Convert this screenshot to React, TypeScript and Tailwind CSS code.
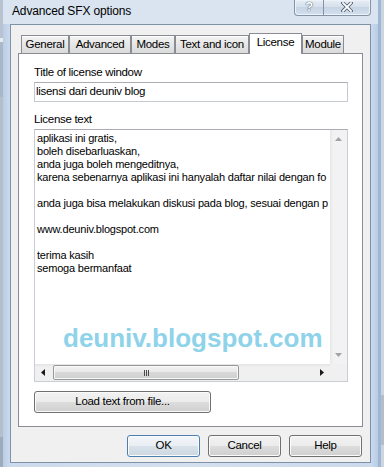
import React from "react";

const lines = [
  "aplikasi ini gratis,",
  "boleh disebarluaskan,",
  "anda juga boleh mengeditnya,",
  "karena sebenarnya aplikasi ini hanyalah daftar nilai dengan fo",
  "",
  "anda juga bisa melakukan diskusi pada blog, sesuai dengan p",
  "",
  "www.deuniv.blogspot.com",
  "",
  "terima kasih",
  "semoga bermanfaat",
];

const tabs = [
  { label: "General", w: "w-[48px]" },
  { label: "Advanced", w: "w-[62px]" },
  { label: "Modes", w: "w-[44px]" },
  { label: "Text and icon", w: "w-[74px]" },
  { label: "License", w: "w-[53px]", active: true },
  { label: "Module", w: "w-[42px]" },
];

function Btn({ children, w, def }: { children: React.ReactNode; w: string; def?: boolean }) {
  return (
    <div
      className={
        "h-[22px] rounded-[3px] border flex items-center justify-center text-[11.5px] text-black shadow-[inset_0_0_0_1px_#fbfbfb] " +
        w +
        (def
          ? " border-[#4d7fae] bg-[linear-gradient(#f3f6f9_0%,#e9eef3_50%,#d9e2ea_50%,#ccd7e1_100%)]"
          : " border-[#707070] bg-[linear-gradient(#f2f2f2_0%,#ebebeb_50%,#dddddd_50%,#cfcfcf_100%)]")
      }
    >
      {children}
    </div>
  );
}

export default function App() {
  return (
    <div className="w-[384px] h-[467px] flex overflow-hidden bg-[#c9d3df] font-['Liberation_Sans',Arial,sans-serif] tracking-[-0.3px] text-black">
      {/* background strip left */}
      <div className="w-[3px] h-full flex flex-col">
        <div className="h-[38px] bg-[#b7c3d1]" />
        <div className="h-[4px] bg-[#e8ecf0]" />
        <div className="h-[55px] bg-[#aab7c6]" />
        <div className="flex-1 bg-[#b4bfcc]" />
        <div className="h-[30px] bg-[#9eabbb]" />
      </div>

      {/* window */}
      <div className="w-[375px] h-full flex flex-col bg-[linear-gradient(90deg,#b9cde6_0px,#cbdaec_7px,#d3e0ee_50%,#cbdaec_calc(100%-7px),#b9cde6_100%)]">
        {/* title bar */}
        <div className="h-[24px] flex items-start justify-between pl-[9px] pr-[7px] bg-[#d9e4f0]">
          <div className="text-[12px] leading-[15px] pt-[4px] tracking-[-0.15px]">Advanced SFX options</div>
          <div className="flex h-[16px] border border-t-0 border-[#8392a6] rounded-b-[4px] overflow-hidden bg-[linear-gradient(#e6edf5,#d4dfeb_50%,#c6d4e4_50%,#d3e0ee)] shadow-[inset_0_0_0_1px_#eef3f8]">
            <div className="w-[28px] flex items-center justify-center text-white font-bold text-[13px] leading-none [text-shadow:0_0_1px_#3d4b5e,0_0_1px_#3d4b5e] pb-[2px]">
              ?
            </div>
            <div className="w-[47px] border-l border-[#8392a6] flex items-center justify-center pb-[1px]">
              <svg width="12" height="10" viewBox="0 0 12 10">
                <path d="M2 1 L10 9 M10 1 L2 9" stroke="#4a5870" strokeWidth="3.4" strokeLinecap="square" />
                <path d="M2 1 L10 9 M10 1 L2 9" stroke="#ffffff" strokeWidth="1.8" strokeLinecap="square" />
              </svg>
            </div>
          </div>
        </div>

        {/* client area */}
        <div className="mx-[7px] h-[439px] border border-[#7f91a8] bg-[#f0f0f0] flex flex-col pt-[8px] pl-[7px]">
          {/* tabs */}
          <div className="h-[20px] flex items-end pl-[3px] relative z-10">
            {tabs.map((t) =>
              t.active ? (
                <div
                  key={t.label}
                  className={"h-[21px] mb-[-1px] bg-white border border-b-0 border-[#898c95] flex items-center justify-center text-[11.5px] pb-[2px] " + t.w}
                >
                  {t.label}
                </div>
              ) : (
                <div
                  key={t.label}
                  className={"h-[18px] flex justify-end " + t.w}
                >
                  <div className="flex-1 border border-b-0 border-[#898c95] bg-[linear-gradient(#f4f4f4,#e6e6e6_50%,#dadada)] flex items-center justify-center text-[11.5px] shadow-[inset_0_1px_0_#ffffff]">
                    {t.label}
                  </div>
                </div>
              )
            )}
          </div>

          {/* panel */}
          <div className="w-[345px] h-[374px] border border-[#898c95] bg-white pl-[15px] pt-[11px] flex flex-col">
            <div className="h-[15px] leading-[15px] text-[11.5px]">Title of license window</div>
            <div className="mt-[2px] w-[314px] h-[20px] border border-[#c5cad2] border-t-[#abadb3] flex items-center pl-[1px] text-[11.5px]">
              lisensi dari deuniv blog
            </div>
            <div className="mt-[10px] h-[15px] leading-[15px] text-[11.5px]">License text</div>
            <div className="mt-[2px] w-[314px] h-[253px] border border-[#c9ced6] border-t-[#abadb3] relative flex flex-col">
              <div className="flex-1 flex min-h-0">
                <div className="flex-1 overflow-hidden pl-[2px] pt-[2px] text-[11px] leading-[13px] tracking-[-0.2px] whitespace-pre">
                  {lines.map((l, i) => (
                    <div key={i} className="h-[13px]">
                      {l}
                    </div>
                  ))}
                </div>
                <div className="w-[17px] bg-[linear-gradient(90deg,#e6e6e6,#f2f2f2_3px,#f2f2f2)] flex flex-col items-center justify-between pt-[7px] pb-[7px]">
                  <svg width="7" height="4" viewBox="0 0 7 4">
                    <path d="M0 4 L3.5 0 L7 4 Z" fill="#a3a3a3" />
                  </svg>
                  <svg width="7" height="4" viewBox="0 0 7 4">
                    <path d="M0 0 L3.5 4 L7 0 Z" fill="#a3a3a3" />
                  </svg>
                </div>
              </div>
              <div className="h-[17px] flex">
                <div className="flex-1 bg-[linear-gradient(#e3e3e3,#f0f0f0_3px,#f0f0f0)] flex items-center pl-[6px] pr-[6px]">
                  <svg width="4" height="7" viewBox="0 0 4 7">
                    <path d="M4 0 L0 3.5 L4 7 Z" fill="#1a1a1a" />
                  </svg>
                  <div className="ml-[8px] w-[186px] h-[15px] rounded-[2px] border border-[#979797] bg-[linear-gradient(#f3f3f3,#e8e8e8_50%,#d8d8d8_50%,#cfcfcf)] shadow-[inset_0_0_0_1px_#f8f8f8] flex items-center justify-center gap-[1px]">
                    <div className="w-[1px] h-[6px] bg-[#4a4a4a]" />
                    <div className="w-[1px] h-[6px] bg-[#4a4a4a]" />
                    <div className="w-[1px] h-[6px] bg-[#4a4a4a]" />
                  </div>
                  <div className="flex-1" />
                  <svg width="4" height="7" viewBox="0 0 4 7">
                    <path d="M0 0 L4 3.5 L0 7 Z" fill="#1a1a1a" />
                  </svg>
                </div>
                <div className="w-[17px] bg-[#f0f0f0]" />
              </div>
              <div className="absolute left-[28px] top-[195px] text-[26px] leading-[26px] font-bold text-[#8fd3ea] tracking-[0px] whitespace-nowrap">
                deuniv.blogspot.com
              </div>
            </div>
            <div className="mt-[9px]">
              <Btn w="w-[177px]">Load text from file...</Btn>
            </div>
          </div>

          {/* bottom buttons */}
          <div className="mt-[8px] flex justify-end gap-[8px] pr-[8px]">
            <Btn w="w-[73px]" def>
              OK
            </Btn>
            <Btn w="w-[73px]">Cancel</Btn>
            <Btn w="w-[73px]">Help</Btn>
          </div>
        </div>
      </div>

      {/* background strip right */}
      <div className="flex-1 h-full flex">
        <div className="w-[3px] bg-[#9fb7d6]" />
        <div className="flex-1 flex flex-col bg-[#cdd5df]">
          <div className="h-[395px]" />
          <div className="h-[50px] bg-[#b5bdc8]" />
        </div>
      </div>
    </div>
  );
}
